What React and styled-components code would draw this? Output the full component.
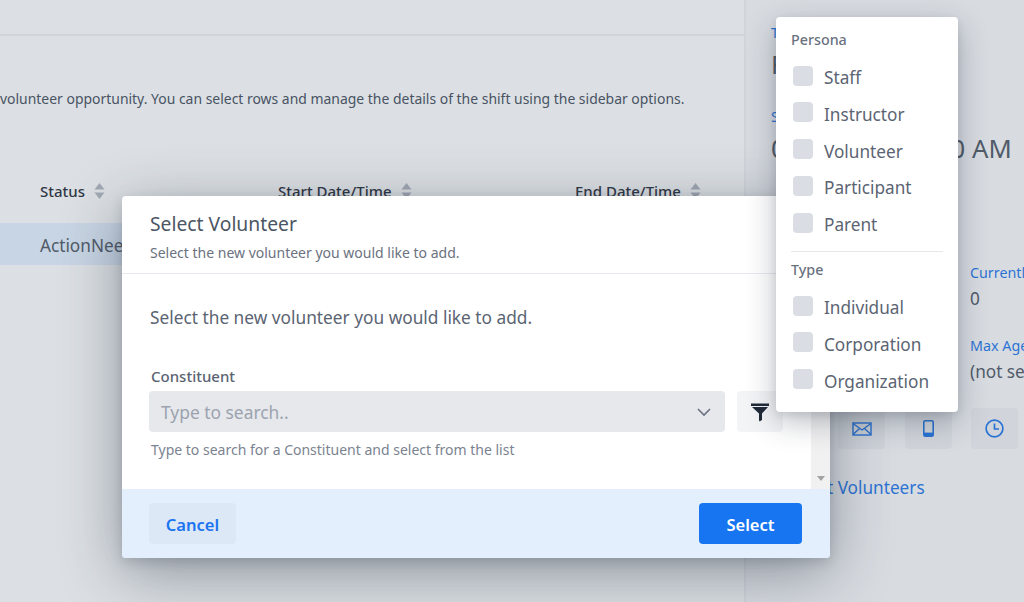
import React from 'react';
import styled, { createGlobalStyle } from 'styled-components';

const GlobalStyle = createGlobalStyle`
  html, body {
    margin: 0;
    height: 100%;
    overflow: hidden;
    font-family: "Noto Sans", "Open Sans", "Liberation Sans", sans-serif;
  }
  #root { height: 100%; }
  * { box-sizing: border-box; }
`;

const Page = styled.div`
  position: relative;
  display: flex;
  width: 1024px;
  height: 602px;
  overflow: hidden;
  background: #f9fcfd;
  color: #374151;
`;

const Main = styled.main`
  width: 744px;
  flex-shrink: 0;
  display: flex;
  flex-direction: column;
`;

const TopBar = styled.div`
  height: 36px;
  border-bottom: 2px solid #e9ecf0;
`;

const Intro = styled.p`
  margin: 53px 0 0;
  font-size: 13.95px;
  line-height: 20px;
  white-space: nowrap;
  color: #414b5a;
`;

const TableHead = styled.div`
  display: grid;
  grid-template-columns: 238px 297px 1fr;
  margin-top: 61px;
  padding: 0 0 11px 40px;
  height: 53px;
  align-items: center;
`;

const HeadCell = styled.div`
  display: flex;
  align-items: center;
  gap: 9px;
  font-size: 15px;
  font-weight: 500;
  color: #1f2937;
`;

const TableRow = styled.div`
  height: 42px;
  padding: 2px 0 0 40px;
  display: flex;
  align-items: center;
  font-size: 17.2px;
  color: #4b5563;
  background: #e0eefd;
`;

const Sidebar = styled.aside`
  flex: 1;
  background: #f4f7f9;
  border-left: 2px solid #ebeef2;
  padding: 23px 0 0 25px;
  overflow: hidden;
`;

const SideLabel = styled.div`
  font-size: 14.3px;
  line-height: 20px;
  color: #1a73e8;
  white-space: nowrap;
`;

const SideValue = styled.div`
  margin-top: ${p => (p.$big ? '6px' : '4px')};
  font-size: ${p => (p.$big ? '25.7px' : '17.2px')};
  line-height: ${p => (p.$big ? '32px' : '24px')};
  color: #4b5563;
  white-space: nowrap;
`;

const SideBlock = styled.div`
  margin-bottom: 26px;
`;

const StatsGrid = styled.div`
  display: grid;
  grid-template-columns: 199px 1fr;
  margin-top: -12px;
  row-gap: 25px;
`;

const ActionRow = styled.div`
  display: flex;
  gap: 19.5px;
  margin: 24px 0 0 67px;
`;

const IconButton = styled.div`
  width: 47px;
  height: 41px;
  flex-shrink: 0;
  border-radius: 4px;
  background: #ebeef2;
  display: flex;
  align-items: center;
  justify-content: center;
  color: #1a73e8;
`;

const SideLink = styled.div`
  margin-top: 27px;
  font-size: 17.2px;
  line-height: 24px;
  color: #1a73e8;
  white-space: nowrap;
`;

const Backdrop = styled.div`
  position: absolute;
  inset: 0;
  background: rgba(107, 114, 128, 0.2);
`;

const Modal = styled.div`
  position: absolute;
  left: 122px;
  top: 196px;
  width: 708px;
  height: 362px;
  background: #fff;
  border-radius: 4px;
  overflow: hidden;
  display: flex;
  flex-direction: column;
  box-shadow: 0 15px 60px rgba(31, 41, 55, 0.42), 0 4px 12px rgba(31, 41, 55, 0.16);
`;

const ModalHeader = styled.header`
  height: 78px;
  padding: 15px 27px 0 28px;
  border-bottom: 1px solid #e9e9f0;
`;

const ModalTitle = styled.h2`
  margin: 0;
  font-size: 19.3px;
  line-height: 26px;
  font-weight: 400;
  color: #4b5563;
`;

const ModalSub = styled.p`
  margin: 7px 0 0;
  font-size: 14px;
  line-height: 18px;
  color: #6b7280;
`;

const ModalScroll = styled.div`
  flex: 1;
  display: flex;
  min-height: 0;
`;

const ModalBody = styled.div`
  flex: 1;
  padding: 33px 28px 0 27px;
`;

const BodyText = styled.p`
  margin: 0;
  padding-left: 1px;
  font-size: 17.3px;
  line-height: 22px;
  color: #5b6472;
`;

const FieldLabel = styled.label`
  display: block;
  margin: 38px 0 5px 2px;
  font-size: 15px;
  line-height: 19px;
  font-weight: 500;
  color: #5b6472;
`;

const FieldRow = styled.div`
  display: flex;
  gap: 12px;
`;

const SearchBox = styled.div`
  flex: 1;
  height: 41px;
  border-radius: 4px;
  background: #e6e8ec;
  padding: 0 13px 0 12px;
  display: flex;
  align-items: center;
  justify-content: space-between;
  font-size: 17.4px;
  color: #9ca3af;
`;

const FilterButton = styled.div`
  width: 46px;
  height: 41px;
  border-radius: 4px;
  background: #f3f4f6;
  display: flex;
  align-items: center;
  justify-content: center;
`;

const Hint = styled.p`
  margin: 9px 0 0 2px;
  font-size: 14px;
  line-height: 18px;
  color: #7b8390;
`;

const Scrollbar = styled.div`
  width: 19px;
  background: #f1f1f1;
  display: flex;
  align-items: flex-end;
  justify-content: center;
  padding-bottom: 8px;
`;

const ScrollArrow = styled.div`
  width: 0;
  height: 0;
  border-left: 4px solid transparent;
  border-right: 4px solid transparent;
  border-top: 5px solid #a3a3a3;
`;

const ModalFooter = styled.footer`
  height: 69px;
  flex-shrink: 0;
  background: #e3effc;
  padding: 14px 28px 14px 27px;
  display: flex;
  justify-content: space-between;
`;

const Button = styled.button`
  height: 41px;
  width: ${p => (p.$primary ? '103px' : '87px')};
  border: 0;
  border-radius: 4px;
  padding: 2px 0 0;
  font: 600 16.5px "Noto Sans", "Open Sans", sans-serif;
  color: ${p => (p.$primary ? '#fff' : '#1a73f0')};
  background: ${p => (p.$primary ? '#1775f1' : '#dce8f6')};
`;

const Dropdown = styled.div`
  position: absolute;
  left: 776px;
  top: 17px;
  width: 182px;
  height: 395px;
  background: #fff;
  border-radius: 4px;
  padding: 13px 15px 0;
  box-shadow: 0 10px 30px rgba(31, 41, 55, 0.3), 0 3px 8px rgba(31, 41, 55, 0.1);
`;

const GroupTitle = styled.div`
  font-size: 14.3px;
  line-height: 20px;
  font-weight: 500;
  color: #6b7280;
`;

const OptionList = styled.div`
  display: flex;
  flex-direction: column;
  gap: 15.8px;
  margin-top: 17px;
  padding-left: 2px;
`;

const Option = styled.div`
  display: flex;
  align-items: center;
  gap: 11px;
  height: 21px;
  font-size: 17.2px;
  color: #5b6472;
`;

const Check = styled.span`
  width: 20px;
  height: 20px;
  border-radius: 4px;
  background: #dadde3;
  flex-shrink: 0;
  position: relative;
  top: -2px;
`;

const Divider = styled.hr`
  margin: 16px 0 8px;
  border: 0;
  border-top: 1px solid #e5e7eb;
`;

const SortArrows = () => (
  <svg width="11" height="16" viewBox="0 0 11 16" fill="#b0b6c0">
    <path d="M5.5 0 L10.5 6.5 H0.5 Z" />
    <path d="M5.5 16 L10.5 9.5 H0.5 Z" />
  </svg>
);

const Chevron = () => (
  <svg width="16" height="16" viewBox="0 0 16 16" fill="none" stroke="#6b7280" strokeWidth="1.6">
    <path d="M2 5 L8 11 L14 5" />
  </svg>
);

const Funnel = () => (
  <svg width="20" height="20" viewBox="0 0 20 20" fill="#1f2937">
    <rect x="1" y="1.5" width="18" height="2.5" />
    <path d="M2 5 H18 L12 11.5 V18 L9.5 19.5 L9 18 V11.5 Z" />
  </svg>
);

const Mail = () => (
  <svg width="20" height="14" viewBox="0 0 20 14" fill="none" stroke="currentColor" strokeWidth="1.4">
    <rect x="1" y="1" width="18" height="12" />
    <path d="M1 1.5 L10 8 L19 1.5 M1 12.5 L7.5 6.5 M19 12.5 L12.5 6.5" />
  </svg>
);

const Phone = () => (
  <svg width="11" height="17" viewBox="0 0 11 17" fill="none" stroke="currentColor">
    <rect x="0.8" y="0.8" width="9.4" height="15.4" rx="1.5" strokeWidth="1.6" />
    <rect x="1" y="12.6" width="9" height="3.4" fill="currentColor" stroke="none" />
  </svg>
);

const Clock = () => (
  <svg width="19" height="19" viewBox="0 0 19 19" fill="none" stroke="currentColor" strokeWidth="1.7">
    <circle cx="9.5" cy="9.5" r="8.4" />
    <path d="M9.5 4.5 V10 H14" />
  </svg>
);

const persona = ['Staff', 'Instructor', 'Volunteer', 'Participant', 'Parent'];
const types = ['Individual', 'Corporation', 'Organization'];

const App = () => (
  <>
    <GlobalStyle />
    <Page>
      <Main>
        <TopBar />
        <Intro>
          volunteer opportunity. You can select rows and manage the details of the shift using the sidebar options.
        </Intro>
        <TableHead>
          <HeadCell>Status <SortArrows /></HeadCell>
          <HeadCell>Start Date/Time <SortArrows /></HeadCell>
          <HeadCell>End Date/Time <SortArrows /></HeadCell>
        </TableHead>
        <TableRow>ActionNeeded</TableRow>
      </Main>
      <Sidebar>
        <SideBlock>
          <SideLabel>Title</SideLabel>
          <SideValue $big>Front Desk</SideValue>
        </SideBlock>
        <SideBlock>
          <SideLabel>Start</SideLabel>
          <SideValue $big>01/10/2022 9:00 AM</SideValue>
        </SideBlock>
        <SideBlock>
          <SideLabel>Type</SideLabel>
          <SideValue $big>Shift</SideValue>
        </SideBlock>
        <StatsGrid>
          <div>
            <SideLabel>Required</SideLabel>
            <SideValue>1</SideValue>
          </div>
          <div>
            <SideLabel>Currently</SideLabel>
            <SideValue>0</SideValue>
          </div>
          <div>
            <SideLabel>Min Age</SideLabel>
            <SideValue>(not set)</SideValue>
          </div>
          <div>
            <SideLabel>Max Age</SideLabel>
            <SideValue>(not set)</SideValue>
          </div>
        </StatsGrid>
        <ActionRow>
          <IconButton><Mail /></IconButton>
          <IconButton><Phone /></IconButton>
          <IconButton><Clock /></IconButton>
        </ActionRow>
        <SideLink>Contact Volunteers</SideLink>
      </Sidebar>
      <Backdrop />
      <Modal>
        <ModalHeader>
          <ModalTitle>Select Volunteer</ModalTitle>
          <ModalSub>Select the new volunteer you would like to add.</ModalSub>
        </ModalHeader>
        <ModalScroll>
          <ModalBody>
            <BodyText>Select the new volunteer you would like to add.</BodyText>
            <FieldLabel>Constituent</FieldLabel>
            <FieldRow>
              <SearchBox>Type to search.. <Chevron /></SearchBox>
              <FilterButton><Funnel /></FilterButton>
            </FieldRow>
            <Hint>Type to search for a Constituent and select from the list</Hint>
          </ModalBody>
          <Scrollbar><ScrollArrow /></Scrollbar>
        </ModalScroll>
        <ModalFooter>
          <Button>Cancel</Button>
          <Button $primary>Select</Button>
        </ModalFooter>
      </Modal>
      <Dropdown>
        <GroupTitle>Persona</GroupTitle>
        <OptionList>
          {persona.map(name => (
            <Option key={name}><Check />{name}</Option>
          ))}
        </OptionList>
        <Divider />
        <GroupTitle>Type</GroupTitle>
        <OptionList>
          {types.map(name => (
            <Option key={name}><Check />{name}</Option>
          ))}
        </OptionList>
      </Dropdown>
    </Page>
  </>
);

export default App;
